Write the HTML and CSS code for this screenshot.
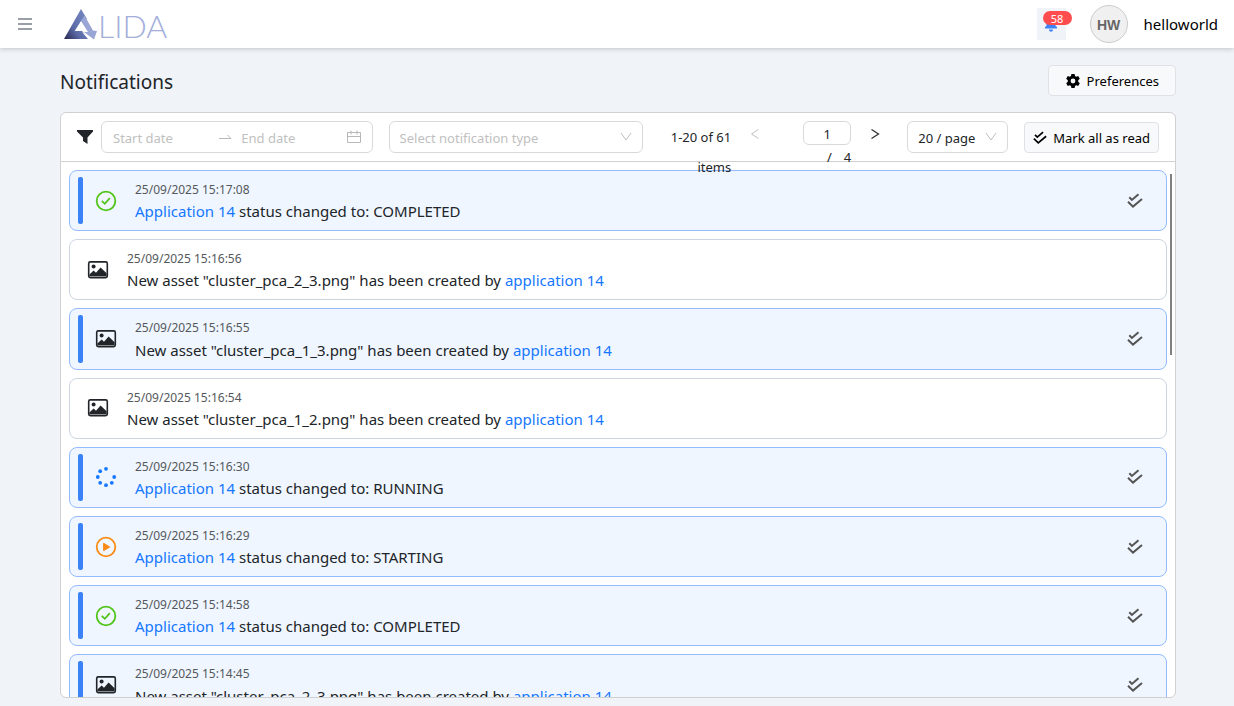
FILE: index.html
```
<!DOCTYPE html>
<html lang="en">
    <head>
        <meta charset="utf-8">
        <title>Notifications</title>
        <link rel="stylesheet" href="styles.css">
    </head>

    <body>
        <!-- shared icons -->
        <svg class="sprite" aria-hidden="true">
            <symbol id="checks" viewBox="0 0 16 16">
                <path d="M2.3 4.3l2.6 2.6 6.6-5.7M1 8.7l5 4.9 9-7.6" fill="none" stroke="currentColor" stroke-width="2"/>
            </symbol>
            <symbol id="arrow-down" viewBox="0 0 12 12">
                <path d="M1 2l5 7 5-7" fill="none" stroke="currentColor" stroke-width="1"/>
            </symbol>
            <symbol id="success" viewBox="0 0 22 22">
                <circle cx="11" cy="11" r="9.3" fill="none" stroke="currentColor" stroke-width="1.8"/>
                <path d="M6.8 10.8l3 3 5-5.6" fill="none" stroke="currentColor" stroke-width="1.8"/>
            </symbol>
            <symbol id="starting" viewBox="0 0 22 22">
                <circle cx="11" cy="11" r="9.3" fill="none" stroke="currentColor" stroke-width="1.8"/>
                <path d="M8.6 7.3v7.4l6.2-3.7z" fill="currentColor" stroke="currentColor" stroke-linejoin="round"/>
            </symbol>
            <symbol id="running" viewBox="0 0 22 22">
                <g fill="currentColor">
                    <circle cx="11" cy="2.8" r="1.9"/>
                    <circle cx="5.2" cy="5.2" r="1.9"/>
                    <circle cx="2.8" cy="11" r="1.9"/>
                    <circle cx="5.2" cy="16.8" r="1.9"/>
                    <circle cx="11" cy="19.2" r="1.9"/>
                    <circle cx="16.8" cy="16.8" r="1.9"/>
                    <circle cx="19.2" cy="11" r="1.9"/>
                </g>
            </symbol>
            <symbol id="picture" viewBox="0 0 22 22">
                <rect x="1.7" y="2.9" width="18.6" height="15.8" rx="1.6" fill="none" stroke="currentColor" stroke-width="1.6"/>
                <circle cx="6.6" cy="7.6" r="2" fill="currentColor"/>
                <path d="M2.4 17.6v-2.2l4.2-3.9 2.4 2.2 4.6-5.2 6 5.8v3.3z" fill="currentColor"/>
            </symbol>
        </svg>

        <header class="navbar">
            <button class="menu" aria-label="Menu">
                <svg width="14" height="14" viewBox="0 0 14 14"><path d="M0 2h14M0 7h14M0 12h14" stroke="#9a9ea5" stroke-width="2"/></svg>
            </button>
            <a class="logo" href="#" aria-label="ALIDA">
                <svg width="34" height="31" viewBox="0 0 34 31">
                    <defs>
                        <linearGradient id="logoDark" x1="0" y1="1" x2="0.8" y2="0.3">
                            <stop offset="0" stop-color="#26264d"/>
                            <stop offset="0.5" stop-color="#5c6ca9"/>
                            <stop offset="1" stop-color="#7080bb"/>
                        </linearGradient>
                    </defs>
                    <path d="M17 0L0 30h25l-7-8h-7.300L17 12l6-2z" fill="url(#logoDark)"/>
                    <path d="M18 23l11 8-5-1-6-7z" fill="#fff"/>
                    <path d="M20.500 6.500L29 21.500l4 .5-3 8.500L20 23h4l-7-11z" fill="#99a6d5"/>
                </svg>
                <span class="logo-name">LIDA</span>
            </a>
            <button class="bell" aria-label="58 unread notifications">
                <svg width="14" height="16" viewBox="0 0 14 16"><path d="M7 0C4 0 2.500 2 2.500 5v5L1 11v1.500h12V11l-1.500-1V5c0-3-1.500-5-4.500-5zM5 13.500h4c0 3-4 3-4 0z" fill="#3b82f6"/></svg>
                <span class="badge">58</span>
            </button>
            <span class="avatar">HW</span>
            <span class="user">helloworld</span>
        </header>

        <main>
            <div class="heading">
                <h1>Notifications</h1>
                <button class="btn preferences">
                    <svg width="16" height="16" viewBox="0 0 16 16">
                        <path fill-rule="evenodd" d="M6.400 1h3.200l.4 2.100 1.200.7 2-.7 1.600 2.700-1.600 1.400v1.600l1.600 1.400-1.600 2.700-2-.7-1.200.7-.4 2.100H6.400L6 12.900l-1.200-.7-2 .7-1.600-2.700 1.600-1.400V7.200L1.200 5.800l1.600-2.700 2 .7L6 3.100zM8 5.600a2.400 2.400 0 100 4.800 2.400 2.400 0 000-4.800z" fill="currentColor"/>
                    </svg>
                    Preferences
                </button>
            </div>

            <section class="card">
                <div class="toolbar">
                    <svg class="filter" width="16" height="16" viewBox="0 0 16 16"><path d="M0 1h16v1.500L10.500 8.500V15L6 12V8.500L0 2.500z" fill="#212529"/></svg>
                    <div class="range">
                        <input type="text" placeholder="Start date" aria-label="Start date">
                        <svg width="14" height="14" viewBox="0 0 14 14"><path d="M1 8.500h12L9.500 5" fill="none" stroke="#b8b8b8"/></svg>
                        <input type="text" placeholder="End date" aria-label="End date">
                        <svg width="14" height="14" viewBox="0 0 14 14"><path d="M.5 2.500h13v10H.5zM.5 6.500h13M4 .5v4M10 .5v4" fill="none" stroke="#b8b8b8"/></svg>
                    </div>
                    <div class="select type">
                        <select aria-label="Notification type">
                            <option>Select notification type</option>
                        </select>
                        <svg width="12" height="12"><use href="#arrow-down"/></svg>
                    </div>
                    <div class="pagination">
                        <span class="total">1-20 of 61 items</span>
                        <button class="page-arrow" aria-label="Previous page" disabled>
                            <svg width="12" height="12" viewBox="0 0 12 12"><path d="M9.500 1.500L2.500 6l7 4.500" fill="none" stroke="currentColor"/></svg>
                        </button>
                        <div class="pager">
                            <input type="text" value="1" aria-label="Page">
                            <span class="slash">/</span><span>4</span>
                        </div>
                        <button class="page-arrow" aria-label="Next page">
                            <svg width="12" height="12" viewBox="0 0 12 12"><path d="M2.500 1.500l7 4.500-7 4.500" fill="none" stroke="currentColor" stroke-width="1.300"/></svg>
                        </button>
                    </div>
                    <div class="select size">
                        <select aria-label="Page size">
                            <option>20 / page</option>
                        </select>
                        <svg width="12" height="12"><use href="#arrow-down"/></svg>
                    </div>
                    <button class="btn mark">
                        <svg width="14" height="14"><use href="#checks"/></svg>
                        Mark all as read
                    </button>
                </div>

                <div class="list">
                    <article class="item unread">
                        <svg class="icon green"><use href="#success"/></svg>
                        <div class="text">
                            <time>25/09/2025 15:17:08</time>
                            <p><a href="#">Application 14</a> status changed to: COMPLETED</p>
                        </div>
                        <button class="read" aria-label="Mark as read"><svg width="16" height="16"><use href="#checks"/></svg></button>
                    </article>
                    <article class="item">
                        <svg class="icon"><use href="#picture"/></svg>
                        <div class="text">
                            <time>25/09/2025 15:16:56</time>
                            <p>New asset "cluster_pca_2_3.png" has been created by <a href="#">application 14</a></p>
                        </div>
                    </article>
                    <article class="item unread">
                        <svg class="icon"><use href="#picture"/></svg>
                        <div class="text">
                            <time>25/09/2025 15:16:55</time>
                            <p>New asset "cluster_pca_1_3.png" has been created by <a href="#">application 14</a></p>
                        </div>
                        <button class="read" aria-label="Mark as read"><svg width="16" height="16"><use href="#checks"/></svg></button>
                    </article>
                    <article class="item">
                        <svg class="icon"><use href="#picture"/></svg>
                        <div class="text">
                            <time>25/09/2025 15:16:54</time>
                            <p>New asset "cluster_pca_1_2.png" has been created by <a href="#">application 14</a></p>
                        </div>
                    </article>
                    <article class="item unread">
                        <svg class="icon blue"><use href="#running"/></svg>
                        <div class="text">
                            <time>25/09/2025 15:16:30</time>
                            <p><a href="#">Application 14</a> status changed to: RUNNING</p>
                        </div>
                        <button class="read" aria-label="Mark as read"><svg width="16" height="16"><use href="#checks"/></svg></button>
                    </article>
                    <article class="item unread">
                        <svg class="icon orange"><use href="#starting"/></svg>
                        <div class="text">
                            <time>25/09/2025 15:16:29</time>
                            <p><a href="#">Application 14</a> status changed to: STARTING</p>
                        </div>
                        <button class="read" aria-label="Mark as read"><svg width="16" height="16"><use href="#checks"/></svg></button>
                    </article>
                    <article class="item unread">
                        <svg class="icon green"><use href="#success"/></svg>
                        <div class="text">
                            <time>25/09/2025 15:14:58</time>
                            <p><a href="#">Application 14</a> status changed to: COMPLETED</p>
                        </div>
                        <button class="read" aria-label="Mark as read"><svg width="16" height="16"><use href="#checks"/></svg></button>
                    </article>
                    <article class="item unread">
                        <svg class="icon"><use href="#picture"/></svg>
                        <div class="text">
                            <time>25/09/2025 15:14:45</time>
                            <p>New asset "cluster_pca_2_3.png" has been created by <a href="#">application 14</a></p>
                        </div>
                        <button class="read" aria-label="Mark as read"><svg width="16" height="16"><use href="#checks"/></svg></button>
                    </article>
                </div>
                <div class="scroll-thumb"></div>
            </section>
        </main>
    </body>
</html>
```
FILE: styles.css
```
* {
    box-sizing: border-box;
}

body {
    margin: 0;
    height: 100vh;
    display: flex;
    flex-direction: column;
    overflow: hidden;
    background-color: #f0f3f8;
    color: #212529;
    font-family: "Noto Sans", sans-serif;
    font-size: 13px;
}

button, input, select {
    font: inherit;
    color: inherit;
    outline: none;
}

button {
    padding: 0;
    border: none;
    background: none;
}

svg {
    flex: none;
}

a {
    color: #1677ff;
    text-decoration: none;
}

.sprite {
    position: absolute;
    width: 0;
    height: 0;
}

/* top bar */

.navbar {
    flex: none;
    height: 48px;
    display: flex;
    align-items: center;
    padding: 0 16px 0 18px;
    background-color: white;
    box-shadow: 0 1px 5px rgba(0, 0, 0, 0.2);
}

.menu {
    display: flex;
}

.logo {
    display: flex;
    align-items: center;
    margin-left: 32px;
    margin-right: auto;
}

.logo-name {
    font-family: Lato, sans-serif;
    font-weight: 300;
    font-size: 32px;
    line-height: 32px;
    padding-top: 4px;
    color: #a3aedb;
}

.bell {
    position: relative;
    display: flex;
    align-items: center;
    width: 29px;
    height: 32px;
    padding-left: 7px;
    background-color: #f0f3f8;
}

.badge {
    position: absolute;
    top: 3px;
    left: 6px;
    width: 29px;
    height: 14px;
    border-radius: 7px;
    background-color: #ff4d4f;
    color: white;
    font-size: 11px;
    line-height: 15px;
    text-align: center;
}

.avatar {
    width: 38px;
    height: 38px;
    margin-left: 24px;
    margin-right: 16px;
    border: 1px solid #ccc;
    border-radius: 50%;
    background-color: #f0f0f0;
    color: #666;
    font-family: "Liberation Sans", sans-serif;
    font-size: 14px;
    font-weight: bold;
    line-height: 38px;
    text-align: center;
}

.user {
    color: black;
    font-size: 15px;
}

/* page */

main {
    flex: 1;
    min-height: 0;
    display: flex;
    flex-direction: column;
    padding: 17px 58px 8px 60px;
}

.heading {
    display: flex;
    justify-content: space-between;
    align-items: center;
    margin-bottom: 16px;
}

h1 {
    margin: 0;
    padding-top: 4px;
    font-size: 19px;
    font-weight: normal;
    line-height: 27px;
}

.btn {
    display: flex;
    align-items: center;
    gap: 6px;
    height: 31px;
    border: 1px solid #dee2e6;
    border-radius: 4px;
    background-color: #f8f9fa;
    color: black;
    white-space: nowrap;
}

.preferences {
    padding: 0 16px;
}

.card {
    position: relative;
    flex: 1;
    min-height: 0;
    display: flex;
    flex-direction: column;
    border: 1px solid #d0d0d0;
    border-radius: 6px;
    background-color: white;
    overflow: hidden;
}

/* filters and pages */

.toolbar {
    flex: none;
    height: 49px;
    display: flex;
    align-items: center;
    padding: 0 16px;
    border-bottom: 1px solid #d0d0d0;
}

.filter {
    margin-right: 8px;
}

.range {
    flex: 1 1 271px;
    min-width: 0;
    height: 32px;
    display: flex;
    align-items: center;
    margin-right: 16px;
    padding: 0 11px;
    border: 1px solid #d9d9d9;
    border-radius: 6px;
}

.range input {
    flex: 1;
    width: 0;
    padding: 2px 0 0;
    border: none;
    background: none;
}

.range svg {
    margin-right: 9px;
}

.range svg:last-child {
    margin-right: 0;
}

.range ::placeholder {
    color: #bfbfbf;
}

.select {
    position: relative;
    height: 32px;
}

.select select {
    appearance: none;
    width: 100%;
    height: 32px;
    padding: 2px 10px 0;
    border: 1px solid #d9d9d9;
    border-radius: 6px;
    background-color: white;
}

.select svg {
    position: absolute;
    right: 11px;
    top: 10px;
    color: #bfbfbf;
}

.type {
    flex: 1 1 254px;
    min-width: 0;
    margin-right: 24px;
}

.type select {
    color: #bfbfbf;
}

.pagination {
    position: relative;
    z-index: 1;
    height: 32px;
    display: flex;
    align-items: flex-start;
}

.total {
    width: 64px;
    padding-top: 1px;
    line-height: 30px;
    text-align: right;
}

.page-arrow {
    width: 48px;
    height: 26px;
    display: flex;
    align-items: center;
    justify-content: center;
    color: #333;
}

.page-arrow:disabled {
    color: #bfbfbf;
}

.pager {
    width: 72px;
    padding-left: 24px;
    line-height: 24px;
    text-align: right;
}

.pager input {
    display: block;
    width: 48px;
    height: 24px;
    padding: 2px 0 0;
    border: 1px solid #d9d9d9;
    border-radius: 6px;
    text-align: center;
}

.slash {
    margin-right: 12px;
}

.size {
    width: 101px;
    margin-left: 8px;
    margin-right: 16px;
}

.mark {
    padding: 2px 8px 0;
}

/* notifications */

.list {
    flex: 1;
    min-height: 0;
    overflow: hidden;
    display: flex;
    flex-direction: column;
    gap: 8px;
    padding: 8px;
}

.item {
    flex: none;
    display: flex;
    align-items: center;
    padding: 6px 8px;
    border: 1px solid #cbd5e1;
    border-radius: 8px;
}

.unread {
    border-color: #93bbfd;
    background-color: #eff6ff;
}

.unread::before {
    content: "";
    align-self: stretch;
    width: 5px;
    margin-right: 3px;
    border-radius: 2px;
    background-color: #3b82f6;
}

.icon {
    width: 22px;
    height: 22px;
    margin: 0 18px 0 9px;
}

.text {
    flex: 1;
    padding: 3px 0 1px;
    line-height: 1.6;
}

time {
    display: block;
    color: #55585c;
    font-size: 12px;
}

p {
    margin: 0;
    font-size: 15px;
}

.read {
    display: flex;
    margin-right: 15px;
    color: #555;
}

.green {
    color: #52c41a;
}

.blue {
    color: #1677ff;
}

.orange {
    color: #fa8c16;
}

.scroll-thumb {
    position: absolute;
    top: 61px;
    right: 3px;
    width: 2px;
    height: 181px;
    background-color: #808080;
}
```
